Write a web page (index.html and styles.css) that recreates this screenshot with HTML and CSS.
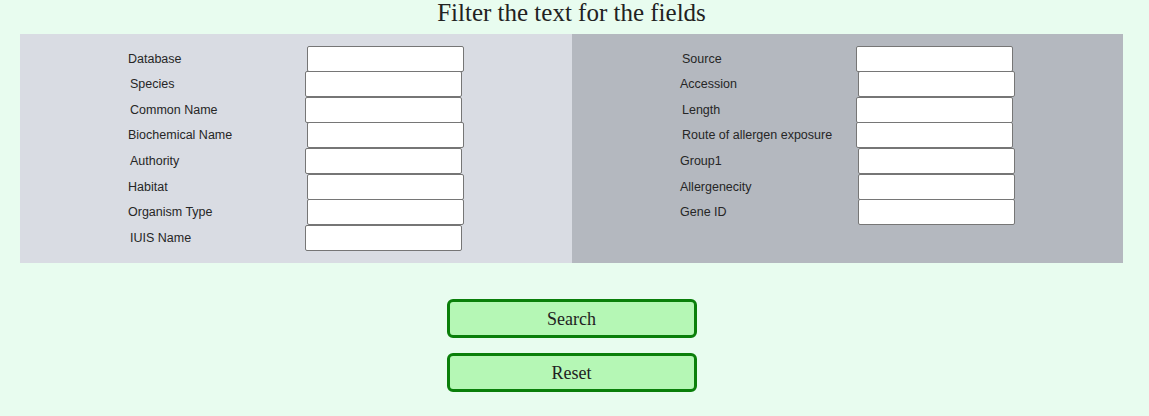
FILE: index.html
```html
<!DOCTYPE html>
<html>
<head>
<meta charset="utf-8">
<link rel="stylesheet" href="styles.css">
</head>
<body>
<h1 class="title">Filter the text for the fields</h1>
<div class="panel">
  <div class="half left">
    <label class="lbl">Database</label><input class="fld" type="text">
    <label class="lbl s2">Species</label><input class="fld n2" type="text">
    <label class="lbl s2">Common Name</label><input class="fld n2" type="text">
    <label class="lbl">Biochemical Name</label><input class="fld" type="text">
    <label class="lbl s2">Authority</label><input class="fld n2" type="text">
    <label class="lbl">Habitat</label><input class="fld" type="text">
    <label class="lbl">Organism Type</label><input class="fld" type="text">
    <label class="lbl s2">IUIS Name</label><input class="fld n2" type="text">
  </div>
  <div class="half right">
    <label class="lbl s2">Source</label><input class="fld n2" type="text">
    <label class="lbl">Accession</label><input class="fld" type="text">
    <label class="lbl s2">Length</label><input class="fld n2" type="text">
    <label class="lbl s2">Route of allergen exposure</label><input class="fld n2" type="text">
    <label class="lbl">Group1</label><input class="fld" type="text">
    <label class="lbl">Allergenecity</label><input class="fld" type="text">
    <label class="lbl">Gene ID</label><input class="fld" type="text">
  </div>
</div>
<div class="actions">
  <button class="btn" type="button">Search</button>
  <button class="btn" type="button">Reset</button>
</div>
</body>
</html>
```
FILE: styles.css
```css
html, body {
  margin: 0;
  padding: 0;
}
body {
  background: #e8fcef;
  font-family: "Liberation Serif", "Times New Roman", serif;
  color: #222;
  width: 1149px;
  height: 416px;
  overflow: hidden;
}
.title {
  margin: 0 6px 0 0;
  height: 34px;
  line-height: 26px;
  font-size: 25px;
  font-weight: normal;
  text-align: center;
  color: #222;
}
.panel {
  margin: 0 26px 0 20px;
  display: grid;
  grid-template-columns: 552px 551px;
  height: 229px;
}
.half {
  display: grid;
  grid-template-columns: 177px 160px;
  grid-auto-rows: 25.57px;
  align-items: center;
  padding: 12px 0 0 108px;
  box-sizing: border-box;
}
.left { background: #d9dce3; }
.right { background: #b4b8bf; grid-template-columns: 176px 160px; }
.lbl {
  font-family: "Liberation Sans", Arial, sans-serif;
  font-size: 12.5px;
  color: #262626;
  white-space: nowrap;
}
.s2 { padding-left: 2px; }
.fld {
  box-sizing: border-box;
  width: 157px;
  height: 26px;
  margin: 0 0 0 2px;
  border: 1px solid #767676;
  border-radius: 2px;
  background: #fff;
  padding: 0 4px;
}
.fld.n2 { margin-left: 0; }
.actions {
  display: flex;
  flex-direction: column;
  align-items: center;
  gap: 15px;
  padding-top: 36px;
  margin-left: -6px;
}
.btn {
  box-sizing: border-box;
  width: 250px;
  height: 39px;
  border: 3px solid #0a7f0a;
  border-radius: 6px;
  background: #b5f7b5;
  font-family: "Liberation Serif", "Times New Roman", serif;
  font-size: 18px;
  color: #222;
  padding: 0 0 0 0;
  line-height: 1;
}
```
